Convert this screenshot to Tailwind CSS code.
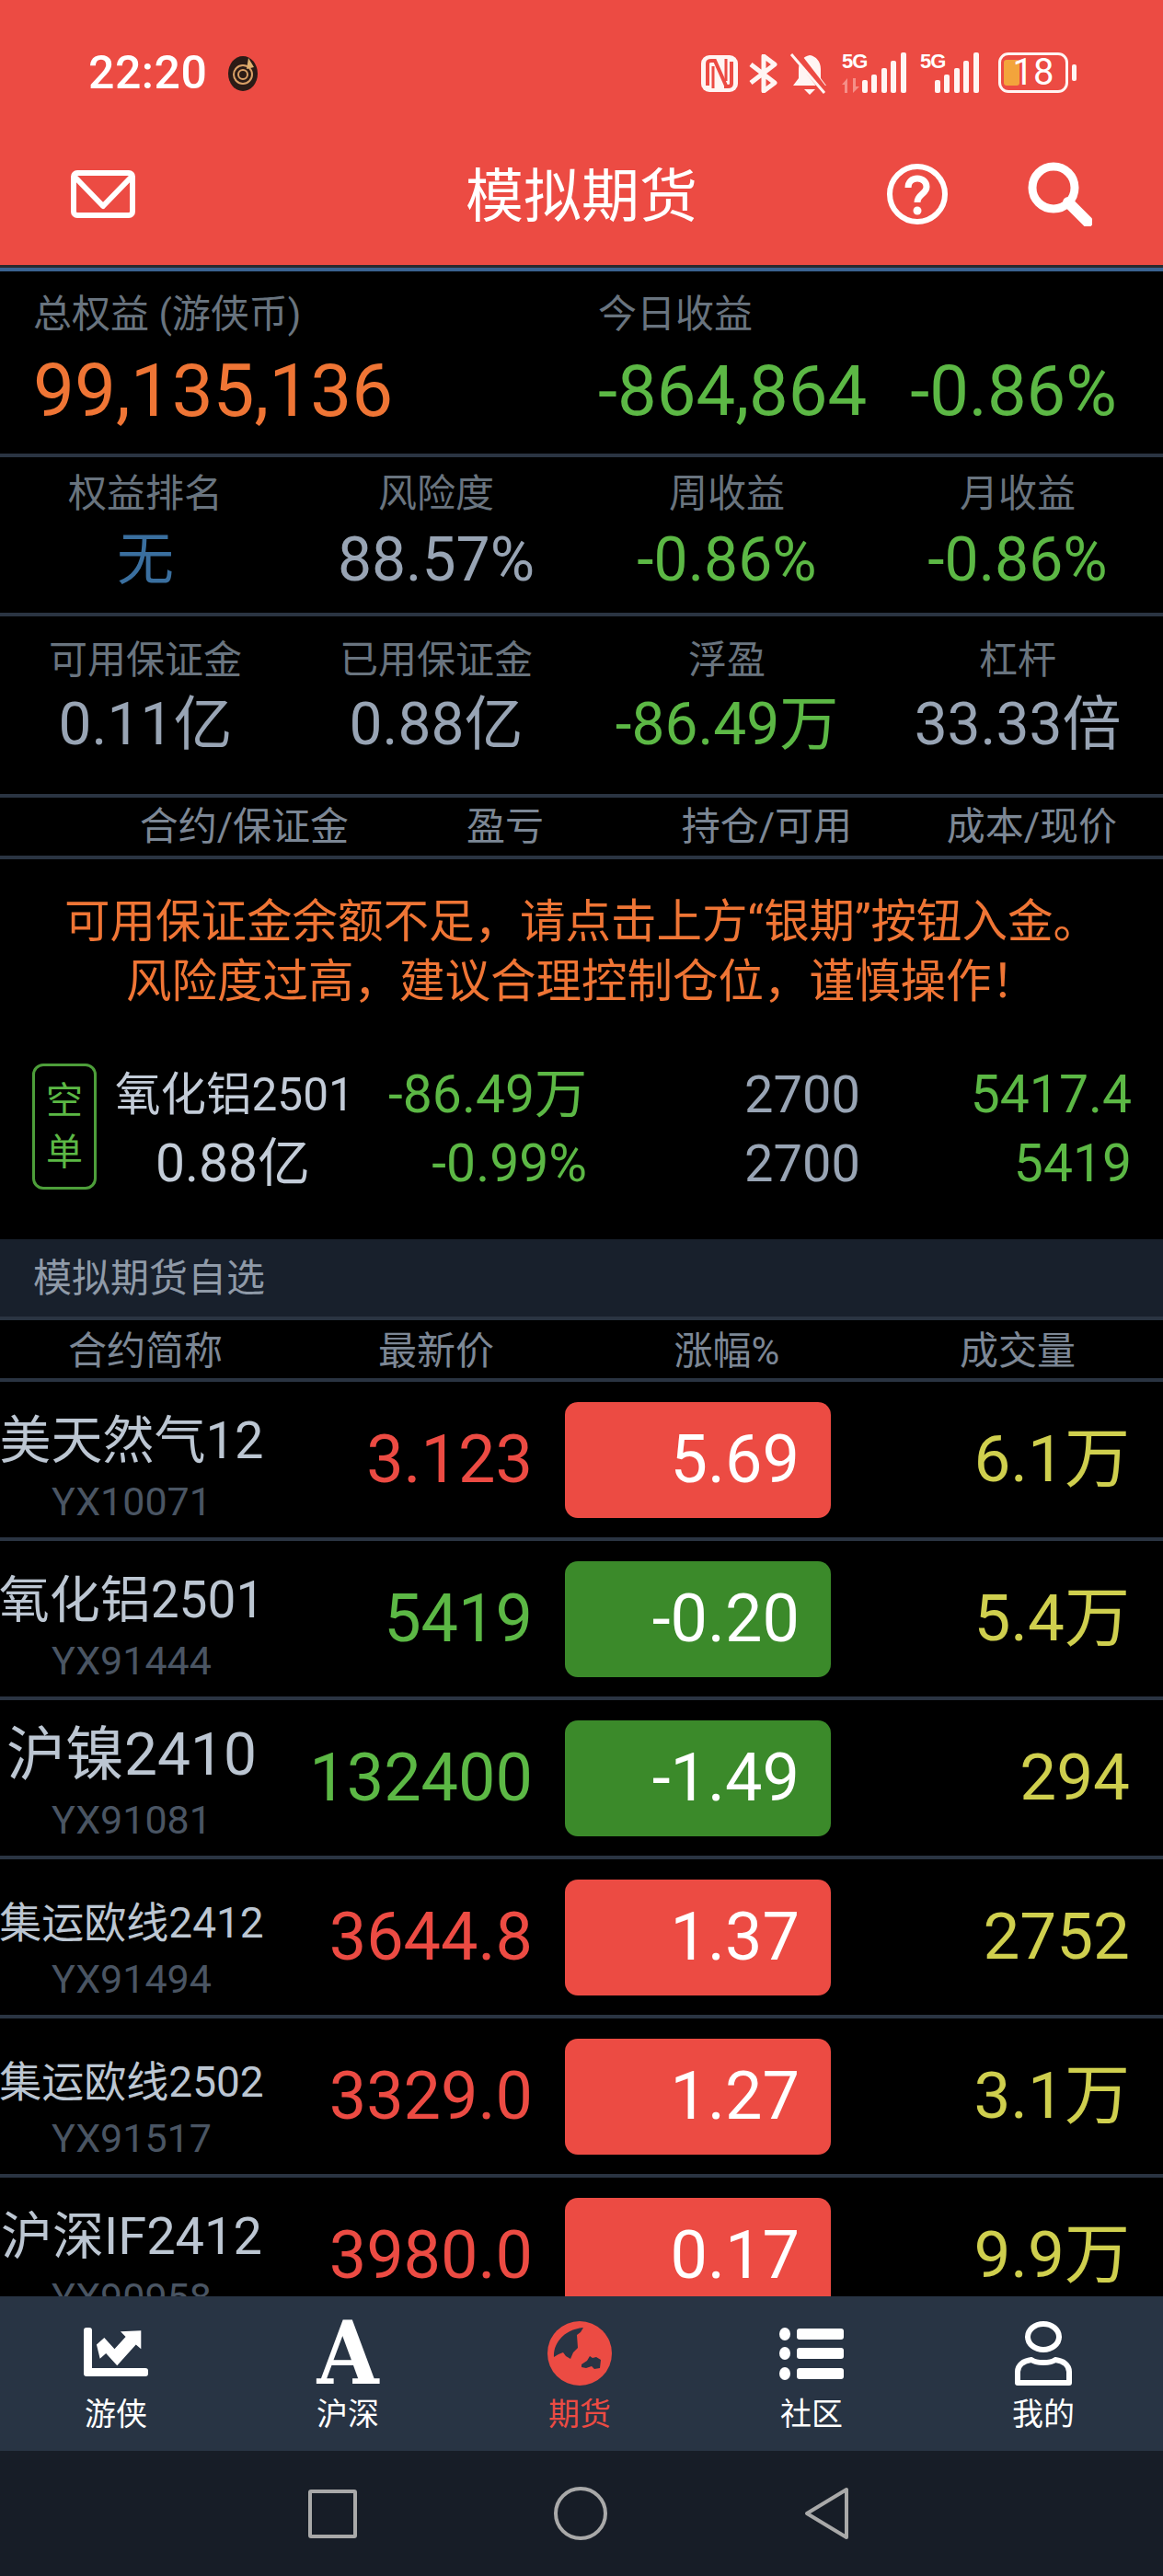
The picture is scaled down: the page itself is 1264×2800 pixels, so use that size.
<!DOCTYPE html>
<html lang="zh-CN">
<head>
  <meta charset="UTF-8" />
  <title>模拟期货</title>
  <script src="https://cdn.jsdelivr.net/npm/@tailwindcss/browser@4"></script>
</head>
<body class="bg-black">
<div class="w-[1264px] h-[2800px] flex flex-col overflow-hidden bg-black text-[#98a4b4] font-['Roboto','Noto_Sans_CJK_SC',sans-serif] font-normal">

  <!-- Status bar + title -->
  <header class="h-[288px] shrink-0 bg-[#ec4b43] text-white">
    <div class="h-[168px] flex items-start pt-[57px] pl-[96px] pr-[94px]">
      <span class="text-[50px] leading-[44px] font-medium tracking-[0.5px]">22:20</span>
      <svg class="ml-[21px] mt-[2px]" width="36" height="42" viewBox="0 0 36 42">
        <ellipse cx="18" cy="21" rx="16" ry="19" fill="#2b1b16"/>
        <circle cx="18" cy="22" r="10" fill="none" stroke="#d9a066" stroke-width="2"/>
        <circle cx="18" cy="22" r="5" fill="none" stroke="#d9a066" stroke-width="2"/>
        <path d="M24 4l6 10-8 2z" fill="#e0b070"/>
      </svg>
      <div class="ml-auto flex items-start">
        <!-- nfc -->
        <svg width="40" height="40" viewBox="0 0 40 40" class="mt-[3px]">
          <rect width="40" height="40" rx="9" fill="#fff5f3"/>
          <path d="M7 33V9q0-3 4-3h4l12 27M33 7v24q0 3-4 3h-4" fill="none" stroke="#ec4b43" stroke-width="4"/>
          <path d="M13 12v24M27 4v24" stroke="#ec4b43" stroke-width="3"/>
        </svg>
        <!-- bluetooth -->
        <svg width="32" height="42" viewBox="0 0 32 42" class="ml-[12px] mt-[2px]" fill="none" stroke="#fff5f3" stroke-width="5" stroke-linejoin="round">
          <path d="M2 11l26 20-12 9V2l12 9L2 31"/>
        </svg>
        <!-- muted bell -->
        <svg width="44" height="46" viewBox="0 0 44 46" class="ml-[12px]">
          <path d="M22 3c7 1 12 7 12 15v10l6 8H4l6-8V18c0-7 5-14 12-15z" fill="#fff5f3"/>
          <path d="M16 40h12l-6 6z" fill="#fff5f3"/>
          <path d="M6 0l34 44" stroke="#ec4b43" stroke-width="8"/>
          <path d="M2 2l36 42" stroke="#fff5f3" stroke-width="3"/>
        </svg>
        <!-- sim 1 -->
        <div class="relative w-[71px] h-[44px] ml-[13px]">
          <span class="absolute left-0 top-[-3px] text-[22px] leading-[26px] font-bold font-['Liberation_Sans',sans-serif] tracking-[-1px]">5G</span>
          <svg class="absolute left-[22px] top-0" width="49" height="44" viewBox="0 0 49 44" fill="#fff5f3">
            <rect x="0" y="30" width="6" height="14" rx="2"/><rect x="10" y="24" width="6" height="20" rx="2"/><rect x="21" y="17" width="6" height="27" rx="2"/><rect x="31" y="9" width="6" height="35" rx="2"/><rect x="42" y="0" width="6" height="44" rx="2"/>
          </svg>
          <svg class="absolute left-0 top-[28px]" width="20" height="16" viewBox="0 0 20 16" fill="#f58f88"><path d="M6 0v16H3V7H0zM12 16V0h3v9h4z"/></svg>
        </div>
        <!-- sim 2 -->
        <div class="relative w-[65px] h-[44px] ml-[14px]">
          <span class="absolute left-0 top-[-3px] text-[22px] leading-[26px] font-bold font-['Liberation_Sans',sans-serif] tracking-[-1px]">5G</span>
          <svg class="absolute left-[16px] top-0" width="49" height="44" viewBox="0 0 49 44" fill="#fff5f3">
            <rect x="0" y="30" width="6" height="14" rx="2"/><rect x="10" y="24" width="6" height="20" rx="2"/><rect x="21" y="17" width="6" height="27" rx="2"/><rect x="31" y="9" width="6" height="35" rx="2"/><rect x="42" y="0" width="6" height="44" rx="2"/>
          </svg>
        </div>
        <!-- battery -->
        <div class="ml-[20px] relative w-[76px] h-[44px] border-[3px] border-[#fff5f3] rounded-[11px]">
          <div class="absolute left-[3px] top-[5px] bottom-[5px] w-[17px] rounded-[3px] bg-[#f3a43c]"></div>
          <span class="absolute inset-0 text-center text-[40px] leading-[38px] font-normal">18</span>
        </div>
        <div class="w-[5px] h-[18px] bg-[#fff5f3] rounded-[2px] ml-[4px] mt-[13px]"></div>
      </div>
    </div>
    <div class="grid grid-cols-[1fr_auto_1fr] items-center px-[77px] h-[85px]">
      <svg width="70" height="52" viewBox="0 0 70 52" fill="none" stroke="#fff" stroke-width="6" stroke-linejoin="round">
        <rect x="3" y="3" width="64" height="46" rx="4"/>
        <path d="M4 7l31 32L66 7"/>
      </svg>
      <span class="text-[63px] leading-[70px] pt-[6px]">模拟期货</span>
      <div class="flex items-center justify-end gap-[86px]">
        <svg width="68" height="68" viewBox="0 0 68 68" fill="none" stroke="#fff" stroke-width="6">
          <circle cx="34" cy="34" r="30"/>
          <path d="M24 27c0-6 4-10 10-10s10 4 10 9c0 8-10 8-10 17" stroke-width="7"/>
          <circle cx="34" cy="52" r="4.5" fill="#fff" stroke="none"/>
        </svg>
        <svg width="70" height="70" viewBox="0 0 70 70" fill="none" stroke="#fff">
          <circle cx="28" cy="28" r="23" stroke-width="9"/>
          <path d="M44 44l21 21" stroke-width="12" stroke-linecap="round"/>
        </svg>
      </div>
    </div>
  </header>
  <div class="h-[3px] shrink-0 bg-[#2a2a2e]"></div>
  <div class="h-[4px] shrink-0 bg-[#3a6391]"></div>

  <main class="flex-1 min-h-0 overflow-hidden">
    <!-- Account summary -->
    <section class="h-[198px] pt-[27px] grid grid-cols-[614px_1fr] pl-[36px] pr-[50px]">
      <div>
        <div class="text-[42px] leading-[40px] text-[#69747f]">总权益 (游侠币)</div>
        <div class="mt-[23px] text-[80px] leading-[80px] text-[#ef7535]">99,135,136</div>
      </div>
      <div>
        <div class="text-[42px] leading-[40px] text-[#69747f]">今日收益</div>
        <div class="mt-[23px] text-[76px] leading-[80px] text-[#5cb845] flex justify-between">
          <span>-864,864</span><span>-0.86%</span>
        </div>
      </div>
    </section>
    <div class="h-[4px] bg-[#2a3442]"></div>

    <section class="h-[169px] pt-[20px] grid grid-cols-4 text-center">
      <div><div class="text-[42px] leading-[40px] text-[#69747f]">权益排名</div><div class="mt-[17px] text-[62px] leading-[70px] text-[#3a6f9f]">无</div></div>
      <div><div class="text-[42px] leading-[40px] text-[#69747f]">风险度</div><div class="mt-[17px] text-[66px] leading-[70px]">88.57%</div></div>
      <div><div class="text-[42px] leading-[40px] text-[#69747f]">周收益</div><div class="mt-[17px] text-[66px] leading-[70px] text-[#5cb845]">-0.86%</div></div>
      <div><div class="text-[42px] leading-[40px] text-[#69747f]">月收益</div><div class="mt-[17px] text-[66px] leading-[70px] text-[#5cb845]">-0.86%</div></div>
    </section>
    <div class="h-[4px] bg-[#2a3442]"></div>

    <section class="h-[193px] pt-[28px] grid grid-cols-4 text-center">
      <div><div class="text-[42px] leading-[40px] text-[#69747f]">可用保证金</div><div class="mt-[15px] text-[64px] leading-[70px]">0.11亿</div></div>
      <div><div class="text-[42px] leading-[40px] text-[#69747f]">已用保证金</div><div class="mt-[15px] text-[64px] leading-[70px]">0.88亿</div></div>
      <div><div class="text-[42px] leading-[40px] text-[#69747f]">浮盈</div><div class="mt-[15px] text-[64px] leading-[70px] text-[#5cb845]">-86.49万</div></div>
      <div><div class="text-[42px] leading-[40px] text-[#69747f]">杠杆</div><div class="mt-[15px] text-[64px] leading-[70px]">33.33倍</div></div>
    </section>
    <div class="h-[4px] bg-[#2a3442]"></div>

    <!-- Positions -->
    <div class="h-[63px] grid grid-cols-[379px_212px_335px_288px] items-center text-right text-[42px] leading-[63px] text-[#7c8795]">
      <span>合约/保证金</span><span>盈亏</span><span>持仓/可用</span><span>成本/现价</span>
    </div>
    <div class="h-[4px] bg-[#2a3442]"></div>

    <div class="pt-[36px] pb-[56px] text-center text-[49.5px] leading-[65px] text-[#ef7535]">
      <p>可用保证金余额不足，请点击上方“银期”按钮入金。</p>
      <p>风险度过高，建议合理控制仓位，谨慎操作！</p>
    </div>

    <div class="mb-[54px] h-[137px] ml-[35px] flex">
      <div class="w-[70px] h-[137px] border-[3px] border-[#4d9e3a] rounded-[12px] flex flex-col items-center justify-center text-[#5cb845] text-[40px] leading-[56px]">
        <span>空</span><span>单</span>
      </div>
      <div class="ml-[20px] w-[1104px] grid grid-cols-[256px_257px_297px_295px] grid-rows-[68px_82px] items-center text-[57px] leading-[68px] text-right">
        <span class="text-[49.5px] text-[#c3ccd8] text-center whitespace-nowrap pr-[5px]">氧化铝2501</span>
        <span class="text-[#5cb845]">-86.49万</span>
        <span class="text-[56px]">2700</span>
        <span class="text-[#5cb845]">5417.4</span>
        <span class="text-[#c3ccd8] text-center">0.88亿</span>
        <span class="text-[#5cb845]">-0.99%</span>
        <span class="text-[56px]">2700</span>
        <span class="text-[#5cb845]">5419</span>
      </div>
    </div>

    <!-- Watchlist -->
    <div class="h-[84px] bg-[#18202c] flex items-center pl-[36px] text-[42px] text-[#8f9aa8]">模拟期货自选</div>
    <div class="h-[4px] bg-[#2a3442]"></div>
    <div class="h-[63px] grid grid-cols-4 items-center text-center text-[42px] leading-[63px] pt-[2px] text-[#7c8795]">
      <span>合约简称</span><span>最新价</span><span>涨幅%</span><span>成交量</span>
    </div>
    <div class="h-[4px] bg-[#2a3442]"></div>
    <div id="watchlist"></div>
  </main>

  <!-- Bottom tabs -->
  <nav class="h-[168px] shrink-0 bg-[#283444] grid grid-cols-5 pr-[4px] text-white">
    <div class="flex flex-col items-center pt-[27px]">
      <svg width="70" height="70" viewBox="0 0 70 70" fill="#fff">
        <path d="M0 10q0-3 3-3h3q3 0 3 3v41h58q3 0 3 3v3q0 3-3 3H3q-3 0-3-3z"/>
        <path d="M15 29l9-8 12 13 13-14-6-6 24-1v21l-6-5-22 24-13-14-7 6z" transform="translate(0 -2) scale(.93 .95)"/>
      </svg>
      <span class="mt-[12px] text-[34px] leading-[38px]">游侠</span>
    </div>
    <div class="flex flex-col items-center pt-[27px]">
      <span class="h-[70px] text-[96px] leading-[70px] font-bold font-['DejaVu_Serif_Condensed','DejaVu_Serif',serif]">A</span>
      <span class="mt-[12px] text-[34px] leading-[38px]">沪深</span>
    </div>
    <div class="flex flex-col items-center pt-[27px] text-[#ec4b43]">
      <svg width="70" height="70" viewBox="0 0 70 70">
        <circle cx="35" cy="35" r="35" fill="#ec4b43"/>
        <path d="M7 39C6 24 18 9 39 7l-3 5-4 3 1 14-5 5-3 7-5-3-3-4-5 2z" fill="#283444"/>
        <path d="M37 47l6-4 3-5 3 2 4-1 5 3-1 9-6 1-3-3-6 2-5-1z" fill="#283444"/>
      </svg>
      <span class="mt-[12px] text-[34px] leading-[38px]">期货</span>
    </div>
    <div class="flex flex-col items-center pt-[27px]">
      <svg width="70" height="70" viewBox="0 0 70 70" fill="#fff">
        <ellipse cx="6" cy="14" rx="6" ry="7"/><rect x="19" y="8" width="51" height="12" rx="3"/>
        <ellipse cx="6" cy="35" rx="6" ry="7"/><rect x="19" y="29" width="51" height="12" rx="3"/>
        <ellipse cx="6" cy="57" rx="6" ry="7"/><rect x="19" y="51" width="51" height="12" rx="3"/>
      </svg>
      <span class="mt-[12px] text-[34px] leading-[38px]">社区</span>
    </div>
    <div class="flex flex-col items-center pt-[27px]">
      <svg width="62" height="70" viewBox="0 0 62 70" fill="none" stroke="#fff" stroke-width="6">
        <ellipse cx="31" cy="17" rx="17" ry="14"/>
        <path d="M18 42c5 4 21 4 26 0 9 1 15 6 15 13v12H3V55c0-7 6-12 15-13z" stroke-linejoin="round"/>
      </svg>
      <span class="mt-[12px] text-[34px] leading-[38px]">我的</span>
    </div>
  </nav>

  <!-- System navigation -->
  <div class="h-[136px] shrink-0 bg-[#171d27] flex items-center justify-center gap-[214px] pr-[8px]">
    <div class="w-[53px] h-[53px] border-[4px] border-[#a9a9a9] rounded-[3px]"></div>
    <div class="w-[58px] h-[58px] border-[4px] border-[#a9a9a9] rounded-full"></div>
    <svg width="48" height="58" viewBox="0 0 48 58" fill="none" stroke="#a9a9a9" stroke-width="4" stroke-linejoin="round">
      <path d="M46 3v52L3 29z"/>
    </svg>
  </div>
</div>

<script>
  const rows = [
    { name: "美天然气12", size: "text-[56px]", code: "YX10071", price: "3.123", pct: "5.69", vol: "6.1万", up: true },
    { name: "氧化铝2501", size: "text-[55px]", code: "YX91444", price: "5419", pct: "-0.20", vol: "5.4万", up: false },
    { name: "沪镍2410", size: "text-[64px]", code: "YX91081", price: "132400", pct: "-1.49", vol: "294", up: false },
    { name: "集运欧线2412", size: "text-[46px]", code: "YX91494", price: "3644.8", pct: "1.37", vol: "2752", up: true },
    { name: "集运欧线2502", size: "text-[46px]", code: "YX91517", price: "3329.0", pct: "1.27", vol: "3.1万", up: true },
    { name: "沪深IF2412", size: "text-[56px]", code: "YX90958", price: "3980.0", pct: "0.17", vol: "9.9万", up: true },
  ];

  document.getElementById("watchlist").innerHTML = rows.map(r => `
    <div class="h-[173px] border-b-[4px] border-[#2a3442] grid grid-cols-[286px_293px_35px_289px_325px] items-center">
      <div class="h-full flex flex-col items-center justify-end pb-[15px]">
        <div class="${r.size} leading-none text-[#bcc6d2] whitespace-nowrap">${r.name}</div>
        <div class="text-[43px] leading-[48px] text-[#4a5563] mt-[14px]">${r.code}</div>
      </div>
      <div class="text-right text-[72px] ${r.up ? 'text-[#ec4b43]' : 'text-[#5cb845]'}">${r.price}</div>
      <div></div>
      <div class="h-[126px] rounded-[14px] flex items-center justify-end pr-[34px] text-[72px] text-white ${r.up ? 'bg-[#ec4b43]' : 'bg-[#3b8a2a]'}">${r.pct}</div>
      <div class="text-right text-[71px] text-[#cfcf4e]">${r.vol}</div>
    </div>
  `).join("");
</script>
</body>
</html>
